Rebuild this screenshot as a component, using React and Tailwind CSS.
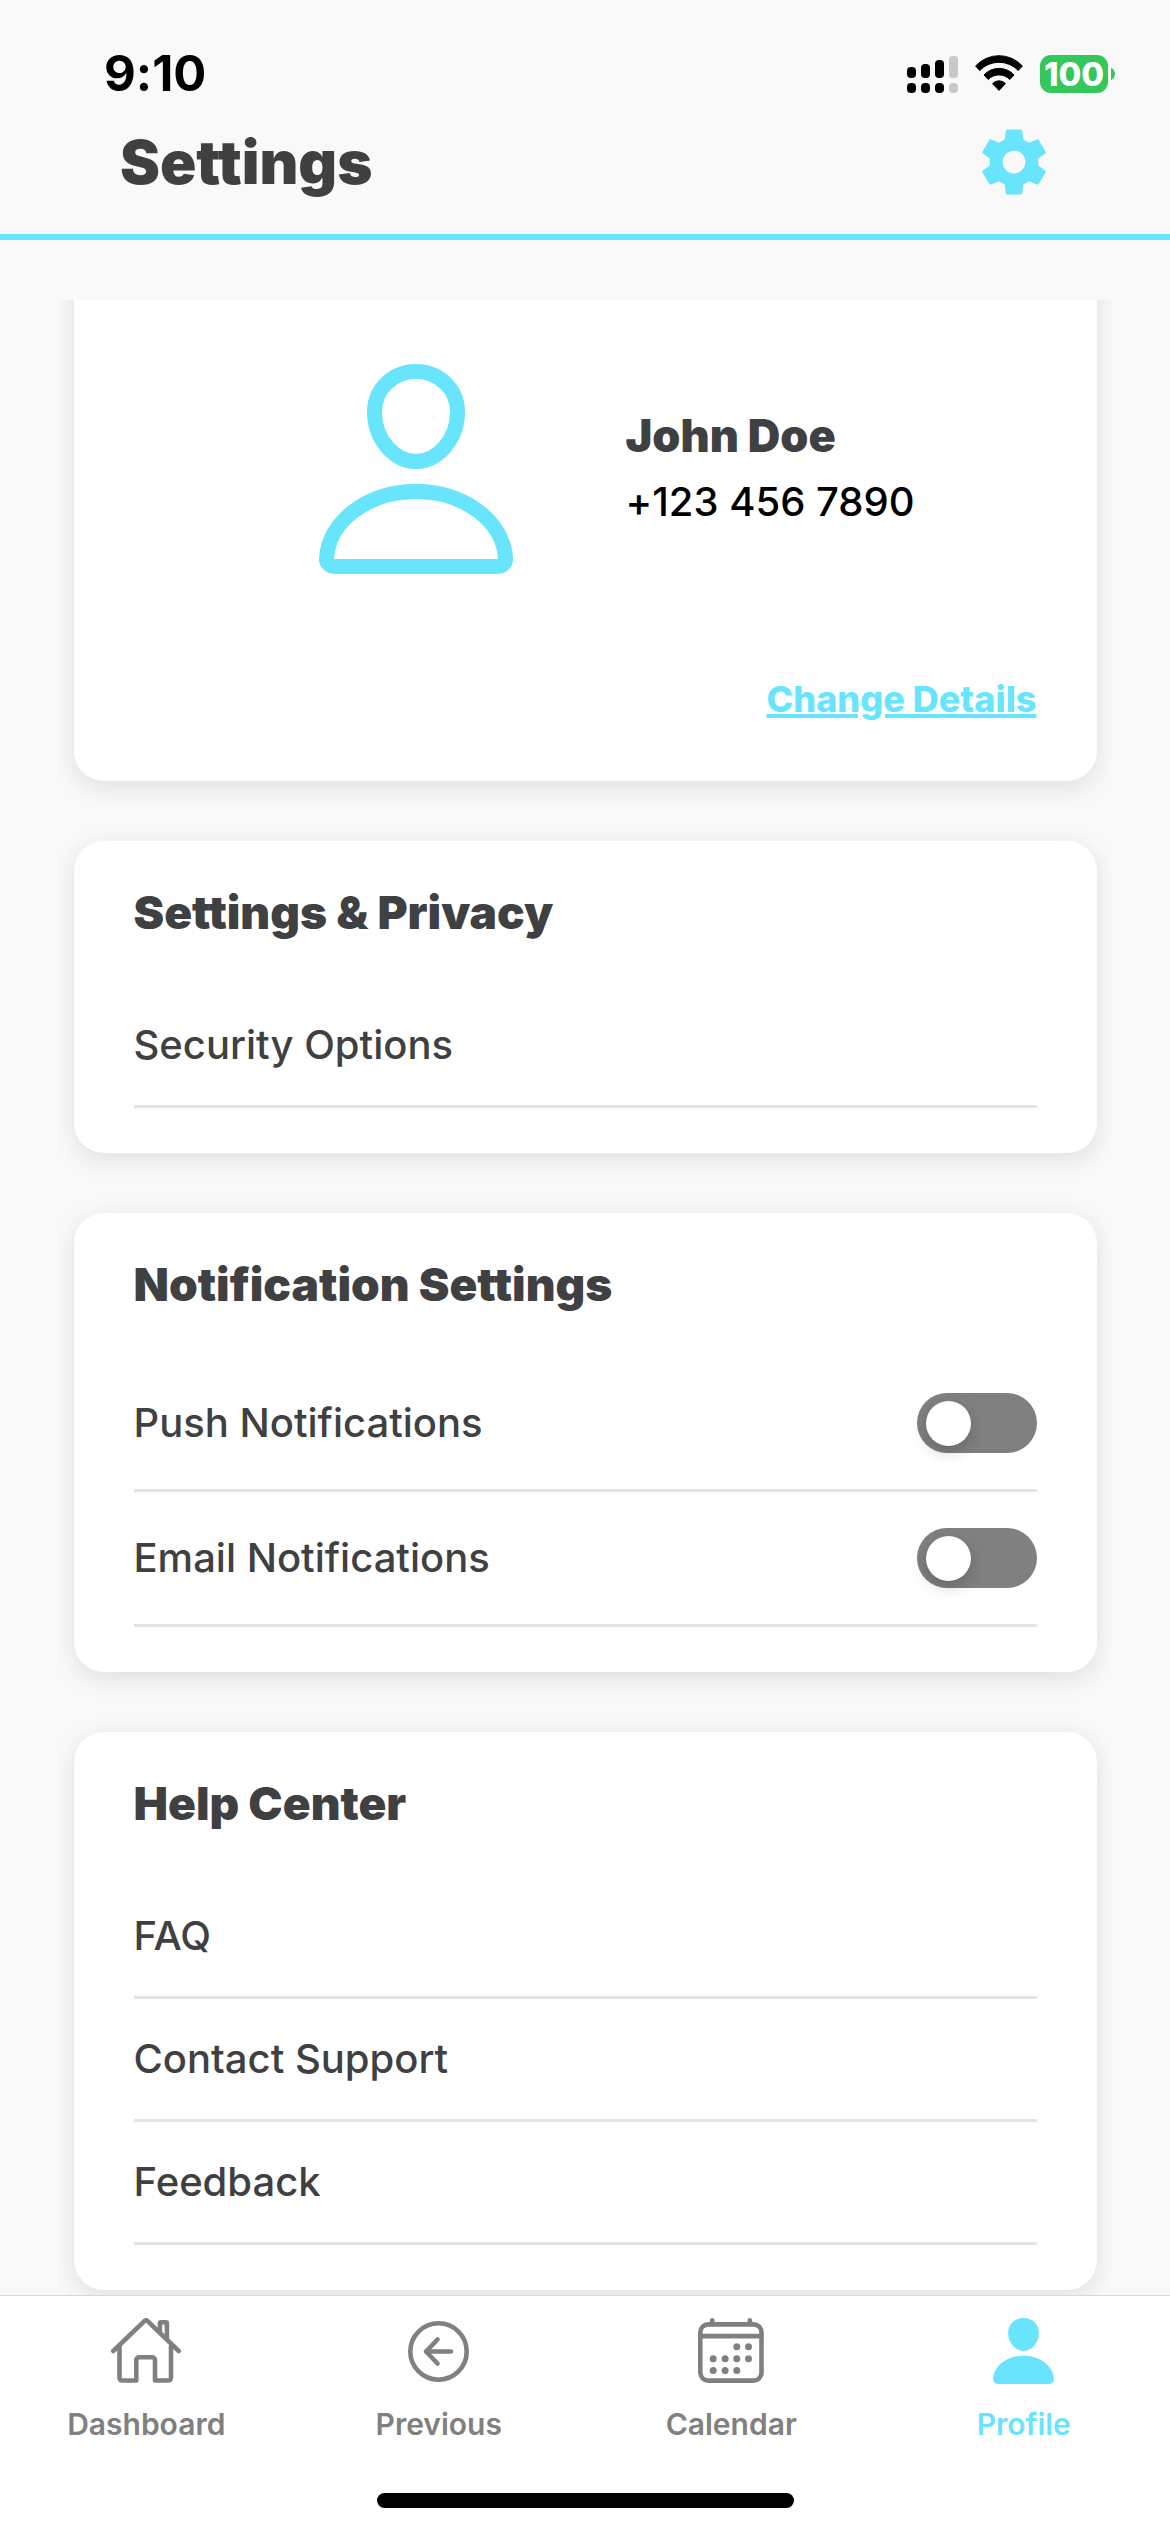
import { useState } from "react";

function SignalIcon() {
  return (
    <svg width="51" height="38" viewBox="0 0 51 38" aria-hidden="true">
      <rect x="0" y="12" width="9" height="11" rx="4" />
      <rect x="14" y="9" width="9" height="14" rx="4" />
      <rect x="28" y="5" width="9" height="18" rx="4" />
      <rect x="42" y="1" width="9" height="22" rx="3.5" fill="#c8c8c8" />
      <rect x="0" y="28" width="9" height="10" rx="4" />
      <rect x="14" y="28" width="9" height="10" rx="4" />
      <rect x="28" y="28" width="9" height="10" rx="4" />
      <rect x="42" y="28" width="9" height="10" rx="4" fill="#c8c8c8" />
    </svg>
  );
}

function WifiIcon() {
  return (
    <svg width="48" height="37" viewBox="0 0 48 37" aria-hidden="true">
      <g stroke="#000" strokeWidth="1" strokeLinejoin="round">
        <path d="M.6 11A31.7 31.7 0 0 1 47.4 11L43.3 15.5A26.8 26.8 0 0 0 4.7 15.5Z" />
        <path d="M9 20A20.3 20.3 0 0 1 39 20L34.8 24.5A15 15 0 0 0 13.2 24.5Z" />
        <path d="M17.5 28.6A9 9 0 0 1 30.5 28.6L24 35.4Z" />
      </g>
    </svg>
  );
}

function Battery() {
  return (
    <div className="flex items-center gap-[3px]" role="img" aria-label="Battery 100 percent">
      <span className="flex h-[38px] w-[68px] items-center justify-center rounded-[11px] bg-[#34c759] text-[33px] leading-[38px] font-extrabold text-white">
        100
      </span>
      <svg width="4" height="12" viewBox="0 0 4 12" aria-hidden="true">
        <path d="M0 0C2.4.8 4 3 4 6S2.4 11.2 0 12Z" fill="#34c759" />
      </svg>
    </div>
  );
}

function GearIcon() {
  return (
    <svg width="78" height="78" viewBox="0 0 24 24" fill="currentColor" aria-hidden="true">
      <path d="M19.43 12.98c.04-.32.07-.64.07-.98s-.03-.66-.07-.98l2.11-1.65c.19-.15.24-.42.12-.64l-2-3.46c-.12-.22-.39-.3-.61-.22l-2.49 1c-.52-.4-1.08-.73-1.69-.98l-.38-2.65C14.46 2.18 14.25 2 14 2h-4c-.25 0-.46.18-.49.42l-.38 2.65c-.61.25-1.17.59-1.69.98l-2.49-1c-.23-.09-.49 0-.61.22l-2 3.46c-.13.22-.07.49.12.64l2.11 1.65c-.04.32-.07.65-.07.98s.03.66.07.98l-2.11 1.65c-.19.15-.24.42-.12.64l2 3.46c.12.22.39.3.61.22l2.49-1c.52.4 1.08.73 1.69.98l.38 2.65c.03.24.24.42.49.42h4c.25 0 .46-.18.49-.42l.38-2.65c.61-.25 1.17-.59 1.69-.98l2.49 1c.23.09.49 0 .61-.22l2-3.46c.12-.22.07-.49-.12-.64l-2.11-1.65zM12 15.5c-1.93 0-3.5-1.57-3.5-3.5s1.57-3.5 3.5-3.5 3.5 1.57 3.5 3.5-1.57 3.5-3.5 3.5z" />
    </svg>
  );
}

function AvatarIcon() {
  return (
    <svg width="194" height="210" viewBox="0 0 194 210" fill="none" stroke="currentColor" strokeWidth="15" className="shrink-0" aria-hidden="true">
      <path d="M97 7.5C120 7.5 138.5 25 138.5 48C138.5 76 118 97.5 97 97.5C76 97.5 55.5 76 55.5 48C55.5 25 74 7.5 97 7.5Z" />
      <path d="M7.5 195C9 158 48 127.5 97 127.5S185 158 186.5 195A7.5 7.5 0 0 1 179 202.5H15A7.5 7.5 0 0 1 7.5 195Z" />
    </svg>
  );
}

function HouseIcon() {
  return (
    <svg width="70" height="66" viewBox="0 0 70 66" fill="none" stroke="currentColor" strokeWidth="4.6" strokeLinecap="round" strokeLinejoin="round" aria-hidden="true">
      <path d="M2.3 33L33.6 2.9Q35 1.7 36.4 2.9L67.7 33" />
      <path d="M48.9 13.5V5.2Q48.9 4.2 49.9 4.2H54.9Q55.9 4.2 55.9 5.2V20.5" />
      <path d="M8.5 28V60A2.5 2.5 0 0 0 11 62.5H25.3V42A2.8 2.8 0 0 1 28.1 39.2H41.2A2.8 2.8 0 0 1 44 42V62.5H57.5A2.5 2.5 0 0 0 60 60V28" />
    </svg>
  );
}

function BackIcon() {
  return (
    <svg width="61" height="61" viewBox="0 0 61 61" fill="none" stroke="currentColor" strokeWidth="4.6" strokeLinecap="round" strokeLinejoin="round" aria-hidden="true">
      <circle cx="30.5" cy="30.5" r="28.2" />
      <path d="M43 30.5H18M29.5 18.5L18 30.5L29.5 42.5" />
    </svg>
  );
}

const calendarDots = [
  [38.8, 28.7], [50.5, 28.7],
  [15.2, 40.7], [27.1, 40.7], [38.8, 40.7], [50.5, 40.7],
  [15.2, 52.4], [27.1, 52.4], [38.8, 52.4],
];

function CalendarIcon() {
  return (
    <svg width="66" height="66" viewBox="0 0 66 66" aria-hidden="true">
      <g fill="none" stroke="currentColor" strokeWidth="4.6" strokeLinecap="round">
        <rect x="2.3" y="6.4" width="61.2" height="56.2" rx="8" />
        <path d="M3 18.1H63" />
        <path d="M14.2 2.3V6M51.8 2.3V6" />
      </g>
      {calendarDots.map(([x, y]) => (
        <circle key={x + "-" + y} cx={x} cy={y} r="3.5" fill="currentColor" />
      ))}
    </svg>
  );
}

function PersonIcon() {
  return (
    <svg width="61" height="66" viewBox="0 0 194 210" fill="currentColor" aria-hidden="true">
      <path d="M97 0C125 0 146 20 146 48C146 80 122 105 97 105C72 105 48 80 48 48C48 20 69 0 97 0Z" />
      <path d="M0 195C2 153 44 120 97 120S192 153 194 195A15 15 0 0 1 179 210H15A15 15 0 0 1 0 195Z" />
    </svg>
  );
}

function Card({ title, children }) {
  return (
    <section className="mt-[60px] rounded-[30px] bg-white px-[60px] py-[45px] shadow-[0_6px_24px_rgba(0,0,0,0.11)]">
      <h2 className="mb-[47px] text-[46px] leading-[52px] font-black">{title}</h2>
      <ul>{children}</ul>
    </section>
  );
}

function LinkRow({ label }) {
  return (
    <li className="border-b-[3px] border-[#e4e4e4]">
      <a href="#" className="block py-[36px] text-[40px] leading-[48px] font-medium">
        {label}
      </a>
    </li>
  );
}

function ToggleRow({ id, label }) {
  const [on, setOn] = useState(false);
  return (
    <li className="flex items-center justify-between border-b-[3px] border-[#e4e4e4] py-[36px]">
      <label htmlFor={id} className="text-[40px] leading-[60px] font-medium">
        {label}
      </label>
      <input
        id={id}
        type="checkbox"
        role="switch"
        checked={on}
        onChange={(e) => setOn(e.target.checked)}
        className="flex h-[60px] w-[120px] cursor-pointer appearance-none items-center rounded-full bg-[#808080] px-[9px] before:size-[45px] before:rounded-full before:bg-white before:shadow-[0_6px_16px_rgba(0,0,0,0.2)] before:content-[''] checked:justify-end checked:bg-[#69e4fd]"
      />
    </li>
  );
}

const tabs = [
  { label: "Dashboard", Icon: HouseIcon },
  { label: "Previous", Icon: BackIcon },
  { label: "Calendar", Icon: CalendarIcon },
  { label: "Profile", Icon: PersonIcon, active: true },
];

export default function App() {
  return (
    <div className="flex min-h-screen flex-col bg-[#f9f9f9] font-['Inter',sans-serif] text-[#3f4042] [font-variant-ligatures:none]">
      <header className="border-b-[6px] border-[#69e4fd] pb-[33px]">
        <div className="flex h-[123px] items-center justify-between pt-[24px] pr-[55px] pl-[104px] text-black">
          <time className="text-[49px] leading-[56px] font-bold">9:10</time>
          <div className="flex items-center gap-[17px]">
            <SignalIcon />
            <WifiIcon />
            <Battery />
          </div>
        </div>
        <div className="flex items-center justify-between pr-[117px] pl-[120px]">
          <h1 className="text-[60px] leading-[72px] font-black">Settings</h1>
          <button type="button" aria-label="Settings" className="text-[#69e4fd]">
            <GearIcon />
          </button>
        </div>
      </header>

      <main className="mx-[5%] mt-[60px] flex-1 overflow-hidden px-[15px] pb-[5px]">
        <section className="-mt-[60px] rounded-[30px] bg-white px-[60px] pt-[124px] pb-[60px] shadow-[0_6px_24px_rgba(0,0,0,0.11)]">
          <div className="flex items-center gap-[113px] pl-[185px]">
            <span className="text-[#69e4fd]">
              <AvatarIcon />
            </span>
            <div className="flex flex-col gap-[6px] leading-[60px]">
              <h2 className="text-[45px] font-black">John Doe</h2>
              <p className="text-[40px] font-medium text-black">+123 456 7890</p>
            </div>
          </div>
          <div className="mt-[103px] flex justify-end">
            <a href="#" className="text-[36px] leading-[44px] font-extrabold text-[#69e4fd] underline decoration-[4px] underline-offset-[2px]">
              Change Details
            </a>
          </div>
        </section>

        <Card title="Settings & Privacy">
          <LinkRow label="Security Options" />
        </Card>

        <Card title="Notification Settings">
          <ToggleRow id="push" label="Push Notifications" />
          <ToggleRow id="email" label="Email Notifications" />
        </Card>

        <Card title="Help Center">
          <LinkRow label="FAQ" />
          <LinkRow label="Contact Support" />
          <LinkRow label="Feedback" />
        </Card>
      </main>

      <footer className="border-t border-[#d8d8d8] bg-white pt-[22px] pb-[24px]">
        <nav className="grid grid-cols-4">
          {tabs.map(({ label, Icon, active }) => (
            <a
              key={label}
              href="#"
              aria-current={active ? "page" : undefined}
              className={
                active
                  ? "flex flex-col items-center gap-[22px] text-[#69e4fd]"
                  : "flex flex-col items-center gap-[22px] text-[#808080]"
              }
            >
              <span className="flex h-[66px] items-center">
                <Icon />
              </span>
              <span className="text-[30px] leading-[36px] font-semibold">{label}</span>
            </a>
          ))}
        </nav>
        <div className="mx-auto mt-[51px] h-[15px] w-[417px] rounded-full bg-black" />
      </footer>
    </div>
  );
}
